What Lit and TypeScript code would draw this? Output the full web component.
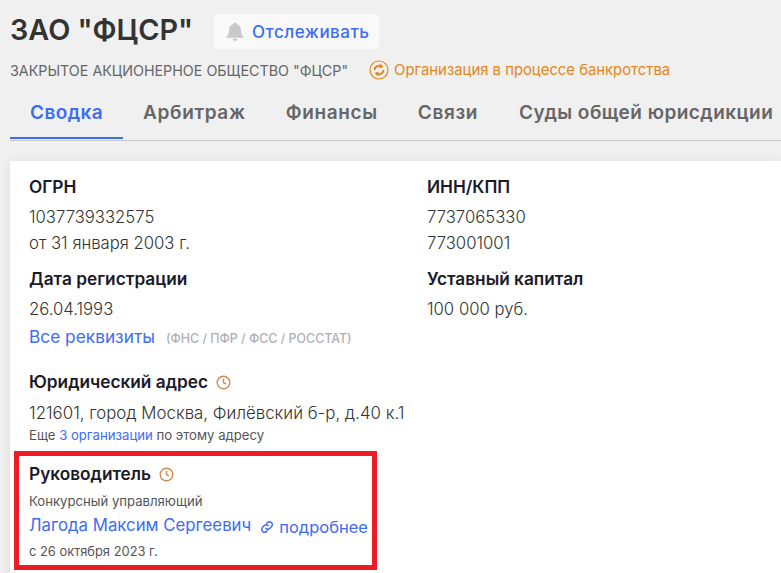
import { LitElement, html, css } from "lit";
import { customElement } from "lit/decorators.js";

@customElement("app-root")
export class AppRoot extends LitElement {
  static styles = css`
    :host { display: block; width: 781px; height: 573px; overflow: hidden; background: #f0f0f0; font-family: Inter, "Noto Sans", sans-serif; color: #333; }
    .page { padding: 0 0 0 10px; }
    .title-row { display: flex; align-items: flex-start; gap: 21px; padding-top: 14px; height: 35px; }
    h1 { margin: 0; font-size: 28.8px; font-weight: 600; line-height: 32px; color: #333; white-space: nowrap; }
    .track { display: flex; align-items: center; gap: 8px; height: 35px; padding: 0 9.5px 0 12px; border-radius: 5px; background: #f9f9f9; color: #3d6cf5; font-size: 17px; letter-spacing: 0.5px; font-weight: 500; }
    .sub { display: flex; align-items: center; height: 22px; margin-top: 10px; font-size: 14.3px; color: #666; white-space: nowrap; }
    .status { display: flex; align-items: center; gap: 5px; margin-left: 21px; color: #e3861c; font-size: 14.85px; }
    .tabs { display: flex; margin-top: 11px; height: 48px; border-bottom: 1px solid #c8c8c8; white-space: nowrap; }
    .tab { padding: 0 20px; font-size: 19px; letter-spacing: 0.65px; font-weight: 600; color: #666; line-height: 42px; height: 47px; box-sizing: border-box; }
    .tab.on { color: #3d6cf5; border-bottom: 2px solid #3d6cf5; letter-spacing: 0.4px; }
    .tab.last { letter-spacing: 0.45px; margin-left: 1px; }
    .card { margin-top: 20px; background: #fff; height: 420px; padding: 14px 0 0 19px; box-shadow: 0 0 10px rgba(0,0,0,.08); position: relative; }
    .cols { display: grid; grid-template-columns: 398px 1fr; }
    .label { font-size: 17.25px; font-weight: 600; color: #1a1a2a; line-height: 24px; display: flex; align-items: center; gap: 8px; }
    .val { font-size: 16.7px; font-weight: 300; line-height: 26px; color: #333; }
    .label + .val { margin-top: 5px; }
    .mt { margin-top: 11px; }
    .link { color: #3d6cf5; }
    .all { margin-top: 2px; display: flex; align-items: baseline; font-size: 17.3px; line-height: 26px; color: #3d6cf5; font-weight: 400; }
    .all small { margin-left: 11px; font-size: 12.4px; color: #b0b0b0; font-weight: 500; }
    .addr { margin-top: 18px; }
    .label.addr + .val { margin-top: 6px; font-size: 16.85px; }
    .small { font-size: 13.15px; line-height: 18px; color: #555; }
    .boss { position: absolute; left: 4px; top: 290px; width: 353px; height: 109px; border: 5px solid #ed1c24; }
    .boss-in { padding: 6px 0 0 10px; }
    .role { margin-top: 6px; }
    .name { display: flex; align-items: flex-start; white-space: nowrap; margin-top: 2px; line-height: 26px; font-size: 16.8px; color: #3d6cf5; }
    .more { display: inline-flex; align-items: center; gap: 5px; margin-left: 9px; padding-top: 2px; font-size: 16.5px; }
    .since { margin-top: 3px; font-size: 12.9px; }
  `;
  clock() {
    return html`<svg width="15" height="15" viewBox="0 0 15 15" fill="none" stroke="#d08a4e" stroke-width="1.4"><circle cx="7.5" cy="7.5" r="6.3"/><path d="M7.5 3.8v3.9l2.6 1.2"/></svg>`;
  }
  render() {
    return html`<div class="page">
      <div class="title-row">
        <h1>ЗАО "ФЦСР"</h1>
        <div class="track">
          <svg width="18" height="20" viewBox="0 0 18 20" fill="#c9c9c9"><path d="M9 0.5c1 0 1.6.7 1.6 1.6 2.8.7 4.4 3 4.4 5.9 0 3.500.8 5 2.500 6.600v1.100H.5v-1.100C2.200 13 3 11.500 3 8c0-2.900 1.600-5.200 4.400-5.900C7.400 1.200 8 .5 9 .5z"/><path d="M6.700 16.800h4.600c0 1.300-1 2.200-2.300 2.200s-2.300-.9-2.300-2.200z"/></svg>
          Отслеживать
        </div>
      </div>
      <div class="sub">ЗАКРЫТОЕ АКЦИОНЕРНОЕ ОБЩЕСТВО "ФЦСР"
        <span class="status">
          <svg width="20" height="20" viewBox="0 0 20 20" fill="none" stroke="#e3861c" stroke-width="1.200"><circle cx="10" cy="10" r="9"/><path stroke-width="2" d="M5.500 10a4.500 4.500 0 0 1 6.500-3.800M14.500 10a4.500 4.500 0 0 1-6.500 3.800"/><path fill="#e3861c" stroke="none" d="M11 3.500l3.500 3.500-4 1.500zM9 16.500l-3.500-3.500 4-1.500z"/></svg>
          Организация в процессе банкротства
        </span>
      </div>
      <div class="tabs">
        <div class="tab on">Сводка</div><div class="tab">Арбитраж</div><div class="tab">Финансы</div><div class="tab">Связи</div><div class="tab last">Суды общей юрисдикции</div>
      </div>
      <div class="card">
        <div class="cols">
          <div>
            <div class="label">ОГРН</div>
            <div class="val">1037739332575</div>
            <div class="val">от 31 января 2003 г.</div>
            <div class="label mt">Дата регистрации</div>
            <div class="val">26.04.1993</div>
          </div>
          <div>
            <div class="label">ИНН/КПП</div>
            <div class="val">7737065330</div>
            <div class="val">773001001</div>
            <div class="label mt">Уставный капитал</div>
            <div class="val">100 000 руб.</div>
          </div>
        </div>
        <div class="all">Все реквизиты<small>(ФНС / ПФР / ФСС / РОССТАТ)</small></div>
        <div class="label addr">Юридический адрес ${this.clock()}</div>
        <div class="val">121601, город Москва, Филёвский б-р, д.40 к.1</div>
        <div class="small">Еще <span class="link">3 организации</span> по этому адресу</div>
        <div class="boss"><div class="boss-in">
          <div class="label">Руководитель ${this.clock()}</div>
          <div class="small role">Конкурсный управляющий</div>
          <div class="name">Лагода Максим Сергеевич
            <span class="more"><svg width="14" height="14" viewBox="0 0 24 24" fill="none" stroke="#3d6cf5" stroke-width="2.500" stroke-linecap="round"><path d="M10 14a5 5 0 0 0 7 0l3-3a5 5 0 0 0-7-7l-1.500 1.500"/><path d="M14 10a5 5 0 0 0-7 0l-3 3a5 5 0 0 0 7 7l1.500-1.500"/></svg>подробнее</span></div>
          <div class="small since">с 26 октября 2023 г.</div>
        </div></div>
      </div>
    </div>`;
  }
}
